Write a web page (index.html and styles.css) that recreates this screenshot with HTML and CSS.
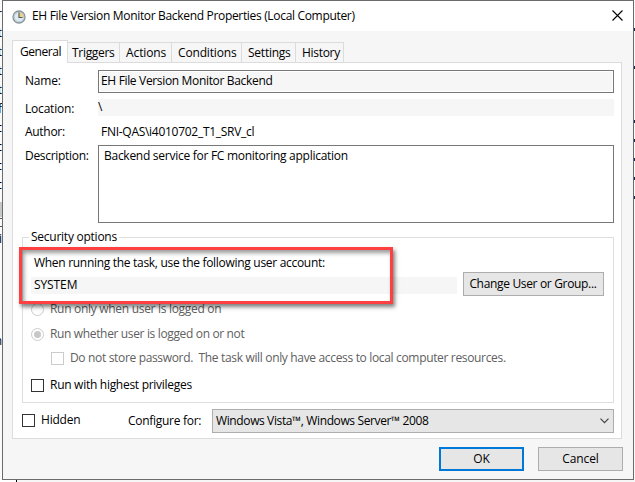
FILE: index.html
```html
<!DOCTYPE html>
<html lang="en">
<head>
<meta charset="utf-8">
<title>EH File Version Monitor Backend Properties</title>
<link rel="stylesheet" href="styles.css">
</head>
<body>
<div class="behind left">
  <i>r</i><i>t</i><i>t</i><i>t</i><i>t</i><i>f</i><i>c</i><i>c</i><i>c</i><i>c</i>
  <b class="band"></b><b class="rule"></b><b class="rule second"></b>
  <i class="mid">i</i><i class="low">n</i>
</div>
<main class="dialog">
  <header class="titlebar">
    <svg class="clock" width="14" height="14" viewBox="0 0 14 14">
      <circle cx="7" cy="7" r="6" fill="#dfeaf0" stroke="#87949b" stroke-width="1.3"/>
      <path d="M7 7V2a5 5 0 0 1 5 5z" fill="#f5cf82"/>
      <circle cx="7" cy="7" r="4.7" fill="none" stroke="#b0c5d1" stroke-width=".8"/>
      <path d="M7 2.5V7.5H10.5" fill="none" stroke="#4c5961" stroke-width="1.1"/>
    </svg>
    <h1>EH File Version Monitor Backend Properties (Local Computer)</h1>
    <svg class="close" width="11" height="11" viewBox="0 0 11 11"><path d="M.5 .5L10.5 10.5M10.5 .5L.5 10.5" stroke="#000" stroke-width="1.1"/></svg>
  </header>
  <nav class="tabs">
    <span class="tab active">General</span>
    <span class="tab triggers">Triggers</span>
    <span class="tab actions">Actions</span>
    <span class="tab conditions">Conditions</span>
    <span class="tab settings">Settings</span>
    <span class="tab history">History</span>
  </nav>
  <section class="panel">
    <div class="row name"><label class="s20">Name:</label><div class="field boxed s33">EH File Version Monitor Backend</div></div>
    <div class="row location"><label class="s20">Location:</label><div class="field filled">\</div></div>
    <div class="row author"><label class="s30">Author:</label><div class="field plain s28">FNI-QAS\i4010702_T1_SRV_cl</div></div>
    <div class="row description"><label class="s30">Description:</label><div class="field area s27">Backend service for FC monitoring application</div></div>
    <fieldset class="security">
      <legend class="s25">Security options</legend>
      <div class="prompt">When running the task, use the following user account:</div>
      <div class="account"><div class="user">SYSTEM</div><button class="btn change">Change User or Group...</button></div>
      <div class="option only disabled"><span class="radio"></span><span class="s30">Run only when user is logged on</span></div>
      <div class="option whether disabled"><span class="radio on"></span><span class="s35">Run whether user is logged on or not</span></div>
      <div class="option store disabled"><span class="check"></span><span class="s33">Do not store password.&nbsp; The task will only have access to local computer resources.</span></div>
      <div class="option highest"><span class="check"></span><span class="s28">Run with highest privileges</span></div>
      <div class="callout"></div>
    </fieldset>
    <div class="config">
      <div class="option hidden"><span class="check"></span><span class="s20">Hidden</span></div>
      <label class="s28">Configure for:</label>
      <div class="combo"><span class="s38">Windows Vista™, Windows Server™ 2008</span>
        <svg width="9" height="6" viewBox="0 0 9 6"><path d="M.5 .7L4.5 4.7L8.5 .7" fill="none" stroke="#444" stroke-width="1.2"/></svg>
      </div>
    </div>
  </section>
  <footer class="actions-bar"><button class="btn ok">OK</button><button class="btn cancel">Cancel</button></footer>
</main>
<div class="behind right">
  <i></i><i></i><i></i><i></i><i></i><i></i><i></i>
</div>
</body>
</html>
```
FILE: styles.css
```css
* { box-sizing: border-box; }
body {
  margin: 0; width: 635px; height: 482px; overflow: hidden; position: relative;
  display: flex; background: linear-gradient(#fff, #fff) 0 0 / 16px 482px no-repeat, linear-gradient(#000, #000) 16px 0 / 1px 482px no-repeat, #f6f6f6;
  font: 12px/16px "Open Sans", "Liberation Sans", sans-serif; letter-spacing: -.3px; color: #000;
}
.behind { flex: none; overflow: hidden; height: 480px; background: #fafafa; }
.left { width: 2px; display: flex; flex-direction: column; align-items: flex-end; padding-top: 6px; }
.left i { font-style: normal; height: 19px; flex: none; letter-spacing: 0; }
.band { width: 2px; height: 15px; margin-top: 6px; background: #c4c8c8; flex: none; }
.rule { width: 2px; height: 1px; margin-top: 1px; background: #555; flex: none; }
.rule.second { margin-top: 7px; }
.left .mid { margin-top: 4px; }
.left .low { margin-top: 83px; }
.right { width: 1px; display: flex; flex-direction: column; padding-top: 28px; gap: 16px; }
.right i { width: 1px; height: 3px; background: #224; flex: none; }
.right i:nth-child(2) { margin-top: 19px; }
.right i:nth-child(3) { margin-top: 35px; }

.dialog { flex: none; width: 632px; height: 480px; border: 1px solid #6b6b6b; background: #f6f6f6; display: flex; flex-direction: column; }
.titlebar { height: 30px; flex: none; background: #fff; display: flex; align-items: center; padding: 0 10px 0 9px; }
.clock { margin-top: 1px; }
.titlebar h1 { margin: 0 auto 0 6px; font-size: 12px; line-height: 16px; font-weight: 400; letter-spacing: -.325px; }
.close { margin-top: -2px; }

.tabs { display: flex; align-items: flex-end; height: 31px; flex: none; padding-left: 9px; }
.tab { height: 20px; border: 1px solid #dcdcdc; border-width: 1px 1px 0 0; padding: 2px 0 0 4px; width: 52px; flex: none; }
.tab.active { position: relative; height: 23px; margin-bottom: -1px; width: 56px; background: #fff; border-left-width: 1px; padding: 3px 0 0 7px; letter-spacing: -.45px; }
.triggers { letter-spacing: -.3px; }
.actions { padding-left: 6px; letter-spacing: -.1px; }
.conditions { width: 70px; padding-left: 6px; letter-spacing: -.16px; }
.settings { width: 54px; padding-left: 6px; letter-spacing: -.24px; }
.history { width: 48px; padding-left: 6px; letter-spacing: -.3px; }

.panel { width: 610px; height: 377px; flex: none; margin-left: 9px; border: 1px solid #dcdcdc; background: #fff; padding: 7px 7px 0 9px; }
.row { display: flex; padding-left: 3px; }
.row label { width: 73px; flex: none; }
.row.name { height: 23px; }
.name label { padding-top: 3px; }
.field { width: 516px; flex: none; }
.boxed { border: 1px solid #777; padding: 2px 0 0 2px; background: #f6f6f6; box-shadow: inset 0 0 0 1px #fff; }
.row.location { margin-top: 6px; height: 17px; }
.location label { padding-top: 2px; }
.filled { background: #f6f6f6; height: 17px; }
.row.author { margin-top: 8px; height: 16px; }
.plain { padding-left: 3px; }
.row.description { margin-top: 5px; height: 78px; }
.description label { padding-top: 3px; }
.area { border: 1px solid #777; padding: 2px 0 0 5px; }

.security { position: relative; margin: 14px 0 0; border: 1px solid #dcdfdf; width: 592px; height: 166px; padding: 0 9px 0 8px; display: flex; flex-direction: column; }
.security legend { position: absolute; left: 6px; top: -9px; background: #fff; padding: 0 2px; height: 16px; }
.prompt { margin: 17px 0 0 3px; }
.account { display: flex; justify-content: space-between; align-items: center; height: 24px; margin-top: 1px; flex: none; }
.user { width: 426px; height: 17px; line-height: 15px; background: #f6f6f6; padding-left: 3px; margin-top: 2px; letter-spacing: -.1px; }
.btn { font-family: inherit; font-size: 12px; line-height: 16px; letter-spacing: -.33px; color: #000; height: 24px; padding: 0; border: 1px solid #adadad; background: #e6e6e6; flex: none; }
.change { width: 141px; padding-right: 1px; }
.option { display: flex; align-items: center; height: 16px; flex: none; }
.disabled { color: #606060; }
.radio { width: 13px; height: 13px; border: 1px solid #ccc; border-radius: 50%; margin-right: 6px; flex: none; display: flex; align-items: center; justify-content: center; }
.radio.on::after { content: ""; width: 7px; height: 7px; border-radius: 50%; background: #c8c8c8; }
.check { width: 13px; height: 13px; border: 1px solid #333; margin-right: 6px; flex: none; }
.disabled .check { border-color: #ccc; }
.only { margin-top: 5px; }
.whether { margin-top: 9px; }
.store { margin: 8px 0 0 20px; }
.highest { margin-top: 11px; }
.callout { position: absolute; left: -4px; top: 9px; width: 374px; height: 57px; border: 3px solid #ff4040; box-shadow: 2px 3px 4px rgba(0,0,0,.5), inset 2px 3px 4px rgba(0,0,0,.4); }

.config { display: flex; height: 24px; margin-top: 6px; align-items: flex-start; }
.hidden { width: 106px; margin-top: 3px; }
.config label { width: 84px; margin-top: 4px; }
.combo { width: 402px; height: 24px; border: 1px solid #adadad; background: #e6e6e6; display: flex; align-items: center; justify-content: space-between; padding: 0 4px 0 3px; }
.actions-bar { display: flex; justify-content: flex-end; gap: 14px; padding: 8px 10px 0 0; }
.ok, .cancel { width: 85px; letter-spacing: -.1px; }
.ok { border: 2px solid #0078d7; }

.s20 { letter-spacing: -.2px; }
.s25 { letter-spacing: -.25px; }
.s27 { letter-spacing: -.27px; }
.s28 { letter-spacing: -.28px; }
.s30 { letter-spacing: -.3px; }
.s33 { letter-spacing: -.335px; }
.s35 { letter-spacing: -.35px; }
.s38 { letter-spacing: -.38px; }
```
